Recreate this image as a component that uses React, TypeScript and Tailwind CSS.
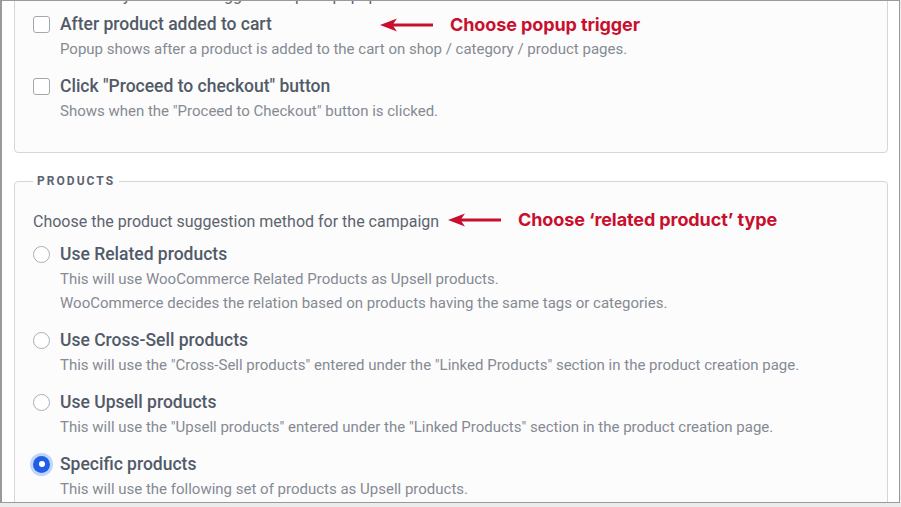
import React from 'react';

const font = { fontFamily: 'Roboto, "Liberation Sans", sans-serif' };

function Arrow() {
  return (
    <svg width="54" height="14" viewBox="0 0 54 14" className="block">
      <path d="M0 7 L17 0.5 L13.5 5.6 L53 5.6 L53 8.4 L13.5 8.4 L17 13.5 Z" fill="#c8102e" />
    </svg>
  );
}

function Note({ text }: { text: string }) {
  return (
    <div className="flex items-center gap-[16px]">
      <Arrow />
      <span className="text-[18px] leading-[24px] font-bold text-[#c8102e] font-['Inter',sans-serif] tracking-[-0.1px]">
        {text}
      </span>
    </div>
  );
}

function Checkbox() {
  return <span className="block w-[17px] h-[17px] rounded-[3px] border border-[#a3a8b0] bg-white" />;
}

function Radio({ checked = false }: { checked?: boolean }) {
  if (checked) {
    return (
      <span className="flex items-center justify-center w-[17px] h-[17px] rounded-full bg-[#1f5fe6] ring-[3px] ring-[#c3d4fa]">
        <span className="block w-[6px] h-[6px] rounded-full bg-white" />
      </span>
    );
  }
  return <span className="block w-[17px] h-[17px] rounded-full border border-[#a9adb4] bg-white" />;
}

function Option({ control, title, desc }: { control: React.ReactNode; title: string; desc: string[] }) {
  return (
    <div className="flex gap-[10px]">
      <div className="h-[24px] flex items-center">{control}</div>
      <div>
        <div className="text-[17.5px] leading-[24px] font-medium text-[#525a68]">{title}</div>
        <div className="mt-[1px]">
          {desc.map((d) => (
            <div key={d} className="text-[15px] leading-[24px] text-[#858a93]">
              {d}
            </div>
          ))}
        </div>
      </div>
    </div>
  );
}

export default function App() {
  return (
    <div className="w-[901px] h-[507px] bg-[#ececec] overflow-hidden" style={font}>
      <div className="relative w-[900px] h-[503px] border-l-2 border-t border-r border-b border-[#9a9a9a] bg-white overflow-hidden">
        {/* Trigger panel */}
        <div className="ml-[12px] -mt-[40px] w-[874px] rounded-[4px] border border-[#d6d6d6] bg-[#fcfcfc] pl-[18px] pt-[24px] pb-[29px]">
          <div className="text-[16px] leading-[20px] text-[#5c6370] mb-[6px]">
            Select when you want to trigger the upsell popup
          </div>
          <div className="flex flex-col gap-[13px]">
            <Option
              control={<Checkbox />}
              title="After product added to cart"
              desc={['Popup shows after a product is added to the cart on shop / category / product pages.']}
            />
            <Option
              control={<Checkbox />}
              title={'Click "Proceed to checkout" button'}
              desc={['Shows when the "Proceed to Checkout" button is clicked.']}
            />
          </div>
        </div>

        {/* Products panel */}
        <fieldset className="ml-[12px] mt-[20px] w-[874px] rounded-[4px] border border-[#d6d6d6] bg-[#fcfcfc] pl-[18px] pt-[23px] pb-[40px]">
          <legend className="px-[4px] text-[12px] leading-[16px] font-bold tracking-[0.17em] text-[#5c6370]">
            PRODUCTS
          </legend>
          <div className="text-[16px] leading-[20px] text-[#5c6370] mb-[10px]">
            Choose the product suggestion method for the campaign
          </div>
          <div className="flex flex-col gap-[13px]">
            <Option
              control={<Radio />}
              title="Use Related products"
              desc={[
                'This will use WooCommerce Related Products as Upsell products.',
                'WooCommerce decides the relation based on products having the same tags or categories.',
              ]}
            />
            <Option
              control={<Radio />}
              title="Use Cross-Sell products"
              desc={['This will use the "Cross-Sell products" entered under the "Linked Products" section in the product creation page.']}
            />
            <Option
              control={<Radio />}
              title="Use Upsell products"
              desc={['This will use the "Upsell products" entered under the "Linked Products" section in the product creation page.']}
            />
            <Option
              control={<Radio checked />}
              title="Specific products"
              desc={['This will use the following set of products as Upsell products.']}
            />
          </div>
        </fieldset>

        {/* Annotations */}
        <div className="absolute left-[378px] top-[12px]">
          <Note text="Choose popup trigger" />
        </div>
        <div className="absolute left-[446px] top-[207px]">
          <Note text="Choose ‘related product’ type" />
        </div>
      </div>
    </div>
  );
}
